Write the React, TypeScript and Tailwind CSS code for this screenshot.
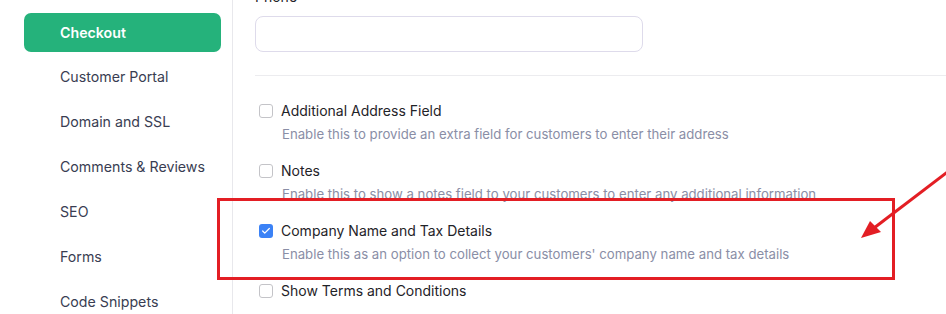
import { Check } from "lucide-react";

const navItems = [
  "Customer Portal",
  "Domain and SSL",
  "Comments & Reviews",
  "SEO",
  "Forms",
  "Code Snippets",
];

const options = [
  {
    label: "Additional Address Field",
    help: "Enable this to provide an extra field for customers to enter their address",
    checked: false,
  },
  {
    label: "Notes",
    help: "Enable this to show a notes field to your customers to enter any additional information",
    checked: false,
  },
  {
    label: "Company Name and Tax Details",
    help: "Enable this as an option to collect your customers' company name and tax details",
    checked: true,
  },
  {
    label: "Show Terms and Conditions",
    help: "",
    checked: false,
  },
];

function Checkbox({ checked }: { checked: boolean }) {
  if (checked) {
    return (
      <span className="flex h-[14px] w-[14px] shrink-0 items-center justify-center rounded-[3px] bg-[#3b82f6]">
        <Check className="h-[10px] w-[10px] text-white" strokeWidth={3} />
      </span>
    );
  }
  return (
    <span className="h-[14px] w-[14px] shrink-0 rounded-[3px] border border-[#c4c4c8] bg-white" />
  );
}

export default function App() {
  return (
    <div className="relative flex h-[314px] w-[946px] overflow-hidden bg-white font-['Inter',sans-serif]">
      <aside className="w-[233px] shrink-0 border-r border-[#e8e8ec] pl-[24px] pr-[11px] pt-[10px]">
        <div className="flex h-[45px] items-center">
          <div className="flex h-[39px] w-full items-center rounded-[7px] bg-[#25b27b] pl-[36px] text-[14.2px] font-semibold text-white">
            Checkout
          </div>
        </div>
        <div className="-mt-px">
          {navItems.map((item) => (
            <div
              key={item}
              className="flex h-[45px] items-center pl-[36px] text-[14.2px] text-[#393d52]"
            >
              {item}
            </div>
          ))}
        </div>
      </aside>

      <main className="flex-1 pl-[22px]">
        <div className="-mt-[13px] h-[20px] text-[14px] leading-[20px] text-[#1f2328]">
          Phone
        </div>
        <div className="mt-[9px] h-[36px] w-[388px] rounded-[8px] border border-[#dedbeb] bg-white" />
        <div className="mt-[23px] h-px bg-[#ececef]" />

        <div className="mt-[25px] flex flex-col gap-[17px]">
          {options.map((o) => (
            <div key={o.label}>
              <div className="flex h-[20px] items-center gap-[8px] pl-[4px]">
                <Checkbox checked={o.checked} />
                <span className="text-[14px] leading-[20px] text-[#1f2328]">{o.label}</span>
              </div>
              {o.help && (
                <div className="mt-[3px] h-[20px] pl-[27px] text-[13.2px] leading-[20px] text-[#8a8ea6]">
                  {o.help}
                </div>
              )}
            </div>
          ))}
        </div>
      </main>

      <div className="pointer-events-none absolute left-[217px] top-[198px] h-[82px] w-[678px] border-[3px] border-[#e31e24]" />
      <svg
        className="pointer-events-none absolute left-0 top-0"
        width="946"
        height="314"
        viewBox="0 0 946 314"
      >
        <line x1="950" y1="170" x2="874" y2="228" stroke="#e31e24" strokeWidth="3" />
        <polygon points="861,238 881,232 870,221" fill="#e31e24" />
      </svg>
    </div>
  );
}
